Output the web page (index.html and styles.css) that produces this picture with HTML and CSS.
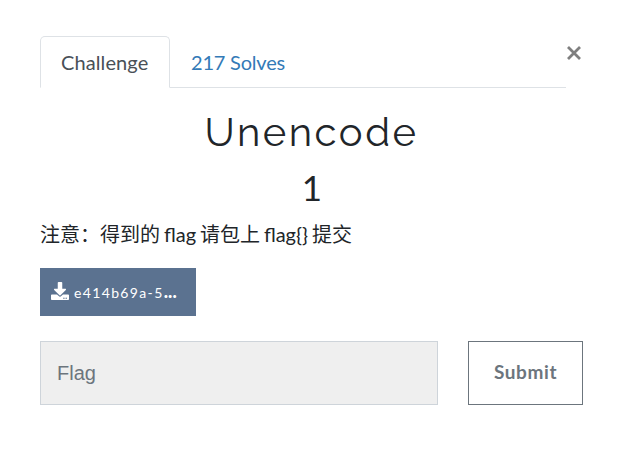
FILE: index.html
```html
<!DOCTYPE html>
<html lang="zh-CN">
<head>
<meta charset="utf-8">
<title>Challenge</title>
<link rel="stylesheet" href="styles.css">
</head>
<body>
<main class="modal">
  <header class="modal-head">
    <nav class="tabs">
      <a class="tab active">Challenge</a>
      <a class="tab solves">217 Solves</a>
    </nav>
    <button class="close" aria-label="Close"><svg viewBox="0 0 14 14" width="14" height="14"><path d="M1 1L13 13M13 1L1 13"/></svg></button>
  </header>
  <h2 class="name"><span>Unencode</span></h2>
  <h3 class="value">1</h3>
  <p class="desc">注意：得到的 flag 请包上 flag{} 提交</p>
  <a class="file">
    <svg class="icon" viewBox="0 0 512 512"><path d="M216 0h80c13.300 0 24 10.700 24 24v168h87.700c17.800 0 26.700 21.500 14.100 34.100L269.700 378.300c-7.500 7.500-19.800 7.500-27.300 0L90.100 226.100c-12.600-12.600-3.700-34.100 14.100-34.100H192V24c0-13.300 10.700-24 24-24zm296 376v112c0 13.300-10.700 24-24 24H24c-13.300 0-24-10.700-24-24V376c0-13.300 10.700-24 24-24h146.700l49 49c20.100 20.100 52.500 20.100 72.600 0l49-49H488c13.300 0 24 10.700 24 24zm-124 88c0-11-9-20-20-20s-20 9-20 20 9 20 20 20 20-9 20-20zm64 0c0-11-9-20-20-20s-20 9-20 20 9 20 20 20 20-9 20-20z"/></svg>
    <span class="filename">e414b69a-5<b>...</b></span>
  </a>
  <form class="answer">
    <input class="flag" type="text" placeholder="Flag">
    <button class="submit" type="button">Submit</button>
  </form>
</main>
</body>
</html>
```

FILE: styles.css
```css
* { box-sizing: border-box; }
body {
  margin: 0;
  background: #fff;
  color: #212529;
  font: 20px/30px Lato, "Noto Sans CJK SC", sans-serif;
}
.modal { padding: 36px 40px 0; height: 464px; overflow: hidden; }
.modal-head { display: flex; width: 543px; height: 52px; }
.tabs { display: flex; width: 526px; border-bottom: 1px solid #dee2e6; }
.tab {
  height: 52px;
  padding: 10px 20px 0;
  border: 1px solid transparent;
  line-height: 30px;
  color: #337ab7;
}
.solves { letter-spacing: -0.2px; }
.tab.active {
  width: 130px;
  color: #495057;
  background: #fff;
  border-color: #dee2e6 #dee2e6 #fff;
  border-radius: 5px 5px 0 0;
  letter-spacing: 0.1px;
}
.close { width: 17px; height: 34px; padding: 0 0 0 1px; border: 0; background: none; }
.close svg { display: block; margin: 0; fill: none; stroke: #7f7f7f; stroke-width: 2.8; }
.name, .value { margin: 0; text-align: center; font-weight: 400; }
.name {
  margin-top: 20px;
  font: 400 40px/48px Raleway, Lato, sans-serif;
  letter-spacing: 2.5px;
}
.value { margin-top: 10px; padding-left: 1px; font-size: 35px; line-height: 42px; }
.desc {
  margin: 10px 0 0;
  padding-top: 1px;
  height: 31px;
  line-height: 30px;
  white-space: nowrap;
  word-spacing: -1.2px;
}
.file {
  display: flex;
  align-items: center;
  width: 156px;
  height: 48px;
  margin-top: 19px;
  padding-left: 11px;
  background: #5b7290;
  color: #fff;
}
.icon { width: 18px; height: 18px; margin: -2px 5px 0 0; fill: #fff; }
.filename { font-size: 14px; letter-spacing: 1.35px; line-height: 20px; }
.filename b { font-size: 18px; line-height: 1; font-weight: 900; letter-spacing: 0.2px; }
.answer { display: flex; gap: 30px; margin: 25px 0 0; }
.flag {
  width: 398px;
  height: 64px;
  padding: 0 16px;
  border: 1px solid #ced4da;
  border-radius: 0;
  background: #efefef;
  font: 20px "Liberation Sans", Arial, sans-serif;
}
.flag::placeholder { color: #6c757d; opacity: 1; }
.submit {
  width: 115px;
  height: 64px;
  padding: 0 0 3px;
  border: 1px solid #6c757d;
  background: #fff;
  color: #6c757d;
  font: 700 19px Lato, sans-serif;
  letter-spacing: 0.6px;
}
```
